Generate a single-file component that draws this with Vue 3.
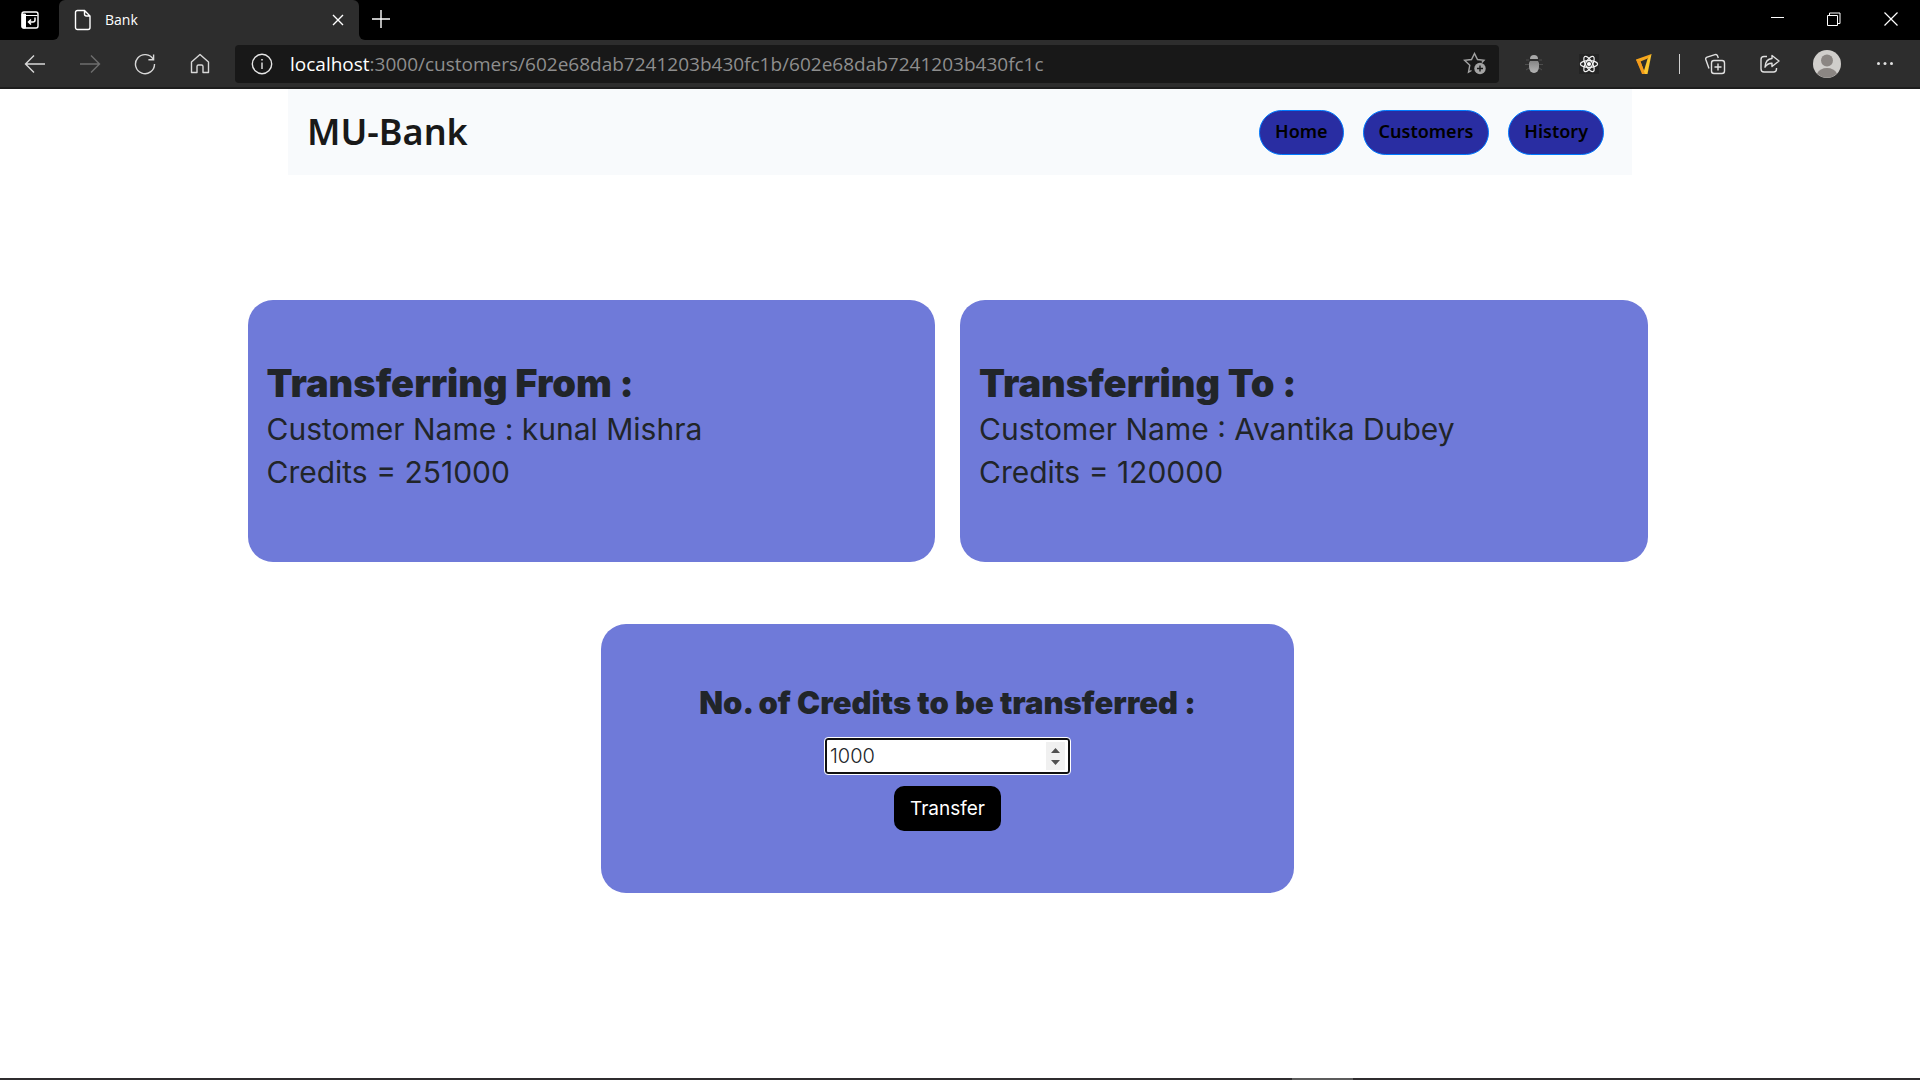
<script setup>
import { ref } from 'vue'

const url = {
  host: 'localhost',
  rest: ':3000/customers/602e68dab7241203b430fc1b/602e68dab7241203b430fc1c'
}
const links = ['Home', 'Customers', 'History']
const accounts = [
  { title: 'Transferring From :', name: 'kunal Mishra', credits: 251000 },
  { title: 'Transferring To :', name: 'Avantika Dubey', credits: 120000 }
]
const amount = ref(1000)
</script>

<template>
  <div class="window">
    <header class="chrome">
      <div class="tabstrip">
        <div class="strip-start">
          <button class="icon-btn tab-actions" aria-label="Tab actions">
            <svg width="24" height="24" viewBox="0 0 24 24">
              <rect x="4" y="4" width="16" height="16" rx="2" fill="none" stroke="#fff" stroke-width="1.4" />
              <path d="M4 7.500h15.500M4 6h3.500v14H5a1 1 0 0 1-1-1z" fill="#fff" stroke="#fff" />
              <path d="M17 9.500v2.500q0 2-2 2h-4.500m2.500-2.500-2.500 2.500 2.500 2.500" fill="none" stroke="#fff" stroke-width="1.500" />
            </svg>
          </button>
        </div>
        <div class="tab">
          <svg class="page-icon" width="18" height="22" viewBox="0 0 18 22" fill="none" stroke="#fff" stroke-width="1.400">
            <path d="M3.500 1.500h7l5.500 5.500v11.500a2 2 0 0 1-2 2H3.500a2 2 0 0 1-2-2v-15a2 2 0 0 1 2-2zM10.500 1.500V5a2 2 0 0 0 2 2H16" />
          </svg>
          <span class="tab-title">Bank</span>
          <button class="icon-btn tab-close" aria-label="Close tab">
            <svg width="12" height="12" viewBox="0 0 12 12" stroke="#fff" stroke-width="1.400"><path d="m1 1 10 10M11 1 1 11" /></svg>
          </button>
        </div>
        <div class="strip-end">
          <button class="icon-btn new-tab" aria-label="New tab">
            <svg width="18" height="18" viewBox="0 0 18 18" stroke="#fff" stroke-width="1.400"><path d="M9 0v18M0 9h18" /></svg>
          </button>
          <div class="window-controls">
            <button class="icon-btn" aria-label="Minimize">
              <svg width="14" height="14" viewBox="0 0 14 14" stroke="#fff"><path d="M1 5.500h13" /></svg>
            </button>
            <button class="icon-btn" aria-label="Restore">
              <svg width="14" height="14" viewBox="0 0 14 14" fill="none" stroke="#fff"><path d="M.5 3.500h10v10H.5zM2.500 3V1h10.500v10.500h-2" /></svg>
            </button>
            <button class="icon-btn" aria-label="Close window">
              <svg width="14" height="14" viewBox="0 0 14 14" stroke="#fff" stroke-width="1.200"><path d="m.5.5 13 13M13.500.5l-13 13" /></svg>
            </button>
          </div>
        </div>
      </div>

      <div class="toolbar">
        <button class="icon-btn tool" aria-label="Back">
          <svg width="22" height="22" viewBox="0 0 22 22" fill="none" stroke="#d8d8d8" stroke-width="1.400"><path d="M10 2.500 1.500 11l8.500 8.500M1.500 11H21" /></svg>
        </button>
        <button class="icon-btn tool" aria-label="Forward">
          <svg width="22" height="22" viewBox="0 0 22 22" fill="none" stroke="#6e6e6e" stroke-width="1.400"><path d="m12 2.500 8.500 8.500-8.500 8.500M20.500 11H1" /></svg>
        </button>
        <button class="icon-btn tool" aria-label="Refresh">
          <svg width="22" height="22" viewBox="0 0 22 22" fill="none" stroke="#d8d8d8" stroke-width="1.400"><path d="M19.300 6.500A9.500 9.500 0 1 0 20.500 11M19.600 1.500v5.200h-5.200" /></svg>
        </button>
        <button class="icon-btn tool" aria-label="Home page">
          <svg width="22" height="22" viewBox="0 0 22 22" fill="none" stroke="#d8d8d8" stroke-width="1.400" stroke-linejoin="round"><path d="m11 1.500 8.500 7.500v10.500h-5.500v-6q0-1.500-1.500-1.500h-3q-1.500 0-1.500 1.500v6H2.500V9z" /></svg>
        </button>

        <div class="address">
          <svg width="22" height="22" viewBox="0 0 22 22" fill="none" stroke="#e6e6e6" stroke-width="1.400"><circle cx="11" cy="11" r="9.700" /><path d="M11 9.500V16" /><circle cx="11" cy="6.800" r=".5" fill="#e6e6e6" stroke-width="1" /></svg>
          <span class="url">{{ url.host }}<span class="url-rest">{{ url.rest }}</span></span>
          <button class="icon-btn" aria-label="Add to favorites">
            <svg width="24" height="24" viewBox="0 0 24 24"><path d="M8.500 18.500 5.500 20.200 6.800 13.200 1.500 8.300 8.500 7.500 11.500 1.500 14.500 7.500 21 8.300 18.800 10.600" fill="none" stroke="#a3a3a3" stroke-width="1.400" /><circle cx="17" cy="16.500" r="5.700" fill="#a3a3a3" /><path d="M17 13.500v6M14 16.500h6" stroke="#181818" stroke-width="1.400" /></svg>
          </button>
        </div>

        <button class="icon-btn tool" aria-label="Bug extension">
          <svg width="22" height="22" viewBox="0 0 22 22">
            <defs><linearGradient id="bug" x1="0" x2="0" y1="0" y2="1"><stop offset="0" stop-color="#858585" /><stop offset="1" stop-color="#b4b4b4" /></linearGradient></defs>
            <path d="M3 7h3M2 11.500h4M3 17l3-2M19 7h-3M20 11.500h-4M19 17l-3-2" stroke="#4d4d4d" />
            <path d="M7 6a4 4 0 0 1 8 0z" fill="#a8a8a8" /><path d="M7 8h8l1 2v4a5 6 0 0 1-10 0v-4z" fill="url(#bug)" />
          </svg>
        </button>
        <button class="icon-btn tool" aria-label="React developer tools">
          <svg width="20" height="20" viewBox="0 0 20 20" fill="none" stroke="#f2f2f2" stroke-width="1.200">
            <path d="M0 0h20v20H0z" fill="#242424" stroke="none" />
            <ellipse cx="10" cy="10" rx="8.600" ry="3.400" /><ellipse cx="10" cy="10" rx="8.600" ry="3.400" transform="rotate(60 10 10)" /><ellipse cx="10" cy="10" rx="8.600" ry="3.400" transform="rotate(120 10 10)" /><circle cx="10" cy="10" r="1.500" fill="#fff" />
          </svg>
        </button>
        <button class="icon-btn tool" aria-label="Video extension">
          <svg width="18" height="22" viewBox="0 0 18 22"><path d="M1 6.500 16.500 1 15 4.500 5.500 8.500l3.500 9L8 21z" fill="#f5a51c" /><path d="M16.500 1 12.500 21H8l4.500-15z" fill="#fcc62e" /><path d="m1 6.500 4.500 2L10 21H7z" fill="#f39a1b" /></svg>
        </button>
        <span class="divider"></span>
        <button class="icon-btn tool" aria-label="Collections">
          <svg width="22" height="22" viewBox="0 0 22 22" fill="none" stroke="#e0e0e0" stroke-width="1.400"><rect x="7.500" y="7.500" width="13" height="13" rx="2.500" /><path d="M14 10.500v7M10.500 14h7M5 15.500 1.800 6.500a2 2 0 0 1 1.300-2.400L11 1.600a2 2 0 0 1 2.500 1.200l.8 2.200" /></svg>
        </button>
        <button class="icon-btn tool" aria-label="Share">
          <svg width="22" height="22" viewBox="0 0 22 22" fill="none" stroke="#e0e0e0" stroke-width="1.400" stroke-linejoin="round"><path d="M8 3.500H5a3 3 0 0 0-3 3V16a3 3 0 0 0 3 3h9.500a3 3 0 0 0 3-3v-1" /><path d="M13 2.500 20 8l-7 5.500v-3.300q-4.500-.2-7 4 .5-8.200 7-8.700z" /></svg>
        </button>
        <button class="icon-btn tool profile" aria-label="Profile">
          <svg width="28" height="28" viewBox="0 0 28 28"><circle cx="14" cy="14" r="14" fill="#d0cecb" /><circle cx="14" cy="10.500" r="6" fill="#8b8683" /><path d="M4 23.500q3-5.500 10-5.500t10 5.500a14 14 0 0 1-20 0z" fill="#8b8683" /></svg>
        </button>
        <button class="icon-btn tool menu" aria-label="Settings and more">
          <svg width="18" height="18" viewBox="0 0 18 18" fill="#e0e0e0"><circle cx="2.500" cy="8.500" r="1.500" /><circle cx="9" cy="8.500" r="1.500" /><circle cx="15.500" cy="8.500" r="1.500" /></svg>
        </button>
      </div>
    </header>

    <nav class="navbar">
      <a class="brand" href="#">MU-Bank</a>
      <div class="links">
        <a v-for="link in links" :key="link" class="link" href="#">{{ link }}</a>
      </div>
    </nav>

    <main class="content">
      <div class="accounts">
        <section v-for="account in accounts" :key="account.title" class="card">
          <h1>{{ account.title }}</h1>
          <p>Customer Name : {{ account.name }}</p>
          <p>Credits = {{ account.credits }}</p>
        </section>
      </div>
      <form class="card transfer" @submit.prevent>
        <label for="credits">No. of Credits to be transferred :</label>
        <input id="credits" v-model="amount" type="number" />
        <button class="submit" type="submit">Transfer</button>
      </form>
    </main>

    <footer class="taskbar"><span class="task"></span></footer>
  </div>
</template>

<style>
body {
  background: #fff;
}
</style>

<style scoped>
.window {
  display: flex;
  flex-direction: column;
  min-height: 100vh;
  font-family: Inter, "Liberation Sans", sans-serif;
  color: #212529;
}
.window * {
  box-sizing: border-box;
}
svg {
  display: block;
  flex: none;
}
.chrome {
  background: #2d2d2d;
  border-bottom: 2px solid #1d1d1d;
  font-family: "Open Sans", "Noto Sans", sans-serif;
}
.icon-btn {
  display: flex;
  align-items: center;
  justify-content: center;
  padding: 0;
  border: 0;
  background: none;
}
.tabstrip {
  display: flex;
  height: 40px;
  background: linear-gradient(#000 50%, #2d2d2d 50%);
}
.strip-start {
  width: 59px;
  background: #000;
  border-bottom-right-radius: 6px;
}
.tab-actions {
  width: 60px;
  height: 40px;
}
.tab {
  display: flex;
  align-items: center;
  width: 300px;
  padding: 0 10px 0 15px;
  background: #2d2d2d;
  border-radius: 6px 6px 0 0;
}
.tab-title {
  flex: 1;
  padding-left: 13px;
  font-size: 14px;
  line-height: 20px;
  color: #fff;
}
.tab-close {
  width: 22px;
  height: 22px;
}
.strip-end {
  flex: 1;
  display: flex;
  justify-content: space-between;
  padding-right: 1px;
  background: #000;
  border-bottom-left-radius: 6px;
}
.new-tab {
  width: 44px;
  height: 38px;
}
.window-controls {
  display: flex;
}
.window-controls .icon-btn {
  width: 57px;
  height: 38px;
}
.toolbar {
  display: flex;
  align-items: center;
  height: 47px;
  padding: 0 7px;
}
.tool {
  width: 55px;
  height: 46px;
}
.tool.profile {
  width: 59px;
}
.tool.menu {
  width: 57px;
}
.address {
  flex: 1;
  display: flex;
  align-items: center;
  height: 38px;
  margin: 0 7px 0 8px;
  padding: 0 12px 0 16px;
  border-radius: 4px;
  background: #181818;
}
.url {
  flex: 1;
  padding-left: 17px;
  font-size: 19px;
  line-height: 26px;
  color: #fff;
}
.url-rest {
  color: #8e8e8e;
}
.divider {
  width: 1px;
  height: 20px;
  margin: 0 7px 0 8px;
  background: #d0d0d0;
}
.navbar {
  display: flex;
  align-items: center;
  justify-content: space-between;
  width: 70%;
  min-height: 86px;
  margin: 0 auto;
  padding: 0 28px 0 19px;
  background: #f8fafc;
  font-family: "Noto Sans", "Open Sans", sans-serif;
}
.brand {
  font-size: 36px;
  font-weight: 600;
  line-height: 50px;
  color: #191919;
  text-decoration: none;
}
.links {
  display: flex;
  gap: 19px;
}
.link {
  padding: 6px 15px 9px;
  border: 1px solid #007bff;
  border-radius: 23px;
  background: #292da2;
  font-size: 18px;
  font-weight: 600;
  line-height: 28px;
  color: #000;
  text-decoration: none;
}
.content {
  padding: 125px 25px 62px 0;
}
.accounts {
  display: grid;
  grid-template-columns: 1fr 1fr;
  gap: 25px;
  max-width: 1400px;
  margin: 0 auto;
}
.card {
  padding: 58px 19px 68px;
  border-radius: 25px;
  background: #6f7ad9;
}
.card h1 {
  margin: 0;
  font-size: 38px;
  font-weight: 900;
  line-height: 50px;
}
.card p {
  margin: 0;
  font-size: 30px;
  line-height: 43px;
}
.card.transfer {
  display: flex;
  flex-direction: column;
  align-items: center;
  max-width: 693px;
  margin: 62px auto 0;
  padding: 61px 19px 62px;
}
.transfer label {
  font-size: 31px;
  font-weight: 900;
  line-height: 36px;
}
.transfer input {
  width: 245px;
  height: 36px;
  margin: 17px 0 12px;
  padding: 1px 3px;
  border: 2px solid #101010;
  border-radius: 3px;
  outline: 1px solid #fff;
  background: #fff;
  color: #212529;
  font: 300 20px/28px Inter, sans-serif;
}
.transfer input::-webkit-inner-spin-button {
  appearance: none;
  width: 19px;
  height: 28px;
  background: #f0f0f0 url("data:image/svg+xml,%3Csvg xmlns='http://www.w3.org/2000/svg' width='19' height='28'%3E%3Cpath d='M5 11l4.500-5 4.500 5zM5 18h9l-4.500 5z' fill='%23505050'/%3E%3C/svg%3E") center no-repeat;
  opacity: 1;
}
.submit {
  padding: 8px 16px;
  border: 0;
  border-radius: 10px;
  background: #000;
  color: #fff;
  font: 400 19px/29px Inter, sans-serif;
}
.taskbar {
  display: flex;
  height: 2px;
  margin-top: auto;
  background: #2f2d2f;
}
.task {
  width: 61px;
  margin-left: 67.3%;
  background: #5c5c5c;
}
</style>
